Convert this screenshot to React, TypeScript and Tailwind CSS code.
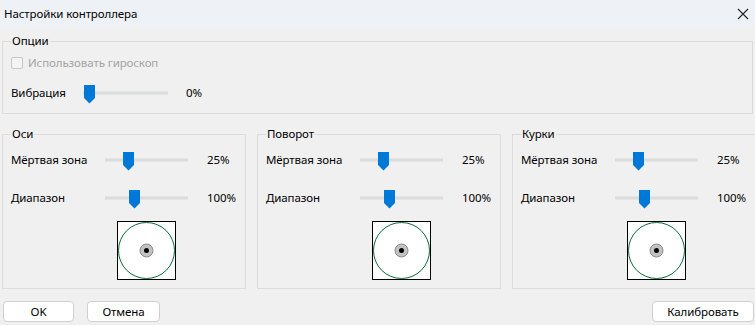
import React from "react"

const font = "font-['Noto_Sans','Liberation_Sans',sans-serif]"

const Thumb: React.FC<{ left: number }> = ({ left }) => (
  <svg
    className="absolute top-[-7px]"
    style={{ left }}
    width="11"
    height="19"
    viewBox="0 0 11 19"
  >
    <polygon points="0,0 11,0 11,13 5.5,18.5 0,13" fill="#0078d7" />
  </svg>
)

const Slider: React.FC<{ width: number; pos: number }> = ({ width, pos }) => (
  <div className="relative h-[4px] bg-[#dadddc] border-y border-[#e3e6e5]" style={{ width }}>
    <Thumb left={pos} />
  </div>
)

const Stick = () => (
  <div className="w-[59px] h-[59px] border border-black bg-white">
    <svg width="57" height="57" viewBox="0 0 57 57">
      <circle cx="28.5" cy="28.5" r="28" fill="none" stroke="#0b6b3a" strokeWidth="1" />
      <circle cx="28.5" cy="28.5" r="6.5" fill="#c2c2c2" stroke="#8a8a8a" strokeWidth="1" />
      <circle cx="28.5" cy="28.5" r="2.5" fill="#000" />
    </svg>
  </div>
)

const Group: React.FC<{ title: string }> = ({ title }) => (
  <fieldset className="w-[244px] h-[163px] shrink-0 border border-[#dcdcdc] px-[8px]">
    <legend className="px-[1px] leading-4">{title}</legend>
    <div className="flex items-center h-[19px] mt-[8px]">
      <span className="w-[94px] leading-4">Мёртвая зона</span>
      <Slider width={83} pos={18} />
      <span className="ml-[19px]">25%</span>
    </div>
    <div className="flex items-center h-[19px] mt-[19px]">
      <span className="w-[94px] leading-4">Диапазон</span>
      <Slider width={83} pos={24} />
      <span className="ml-[19px]">100%</span>
    </div>
    <div className="flex pl-[106px] mt-[14px]">
      <Stick />
    </div>
  </fieldset>
)

export default function App() {
  return (
    <div className={`w-[755px] h-[325px] bg-[#f0f0f0] flex flex-col overflow-hidden text-[11.5px] tracking-[-0.1px] text-black ${font}`}>
      <div className="h-[28px] bg-[#eef2f7] flex items-center justify-between pl-[4px] pr-[5px]">
        <span>Настройки контроллера</span>
        <svg width="12" height="12" viewBox="0 0 12 12" className="mr-[1px]">
          <path d="M1 1 L11 11 M11 1 L1 11" stroke="#222" strokeWidth="1.1" />
        </svg>
      </div>

      <div className="px-[2px]">
        <fieldset className="mt-[5px] h-[81px] border border-[#dcdcdc] px-[8px]">
          <legend className="px-[1px] leading-4">Опции</legend>
          <div className="flex items-center gap-[5px] mt-[6px] h-[16px] text-[#a3a3a3]">
            <span className="w-[12px] h-[12px] border border-[#c6c6c6] rounded-[2px] bg-[#f4f4f4]" />
            <span>Использовать гироскоп</span>
          </div>
          <div className="flex items-center h-[19px] mt-[12px]">
            <span className="w-[72px]">Вибрация</span>
            <Slider width={85} pos={1} />
            <span className="ml-[18px]">0%</span>
          </div>
        </fieldset>

        <div className="flex gap-[11px] mt-[12px]">
          <Group title="Оси" />
          <Group title="Поворот" />
          <Group title="Курки" />
        </div>
      </div>

      <div className="flex items-center mt-[12px] px-[3px]">
        <button className="w-[71px] h-[21px] bg-white border border-[#d0d0d0] rounded-[4px]">OK</button>
        <button className="w-[73px] h-[21px] ml-[13px] bg-white border border-[#d0d0d0] rounded-[4px]">Отмена</button>
        <button className="w-[102px] h-[21px] ml-auto mr-[-2px] bg-white border border-[#d0d0d0] rounded-[4px]">Калибровать</button>
      </div>
    </div>
  )
}
